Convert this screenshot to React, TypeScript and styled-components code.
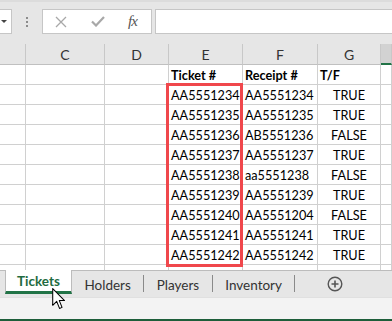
import React from "react";
import styled, { createGlobalStyle } from "styled-components";

const GlobalStyle = createGlobalStyle`
  html, body {
    margin: 0;
    padding: 0;
    background: #ffffff;
  }
  * {
    box-sizing: border-box;
  }
`;

const COLS = "26px 79px 64px 74px 75px 63px 1fr";
const GRID_LINE = "#d0d0d0";
const EXCEL_GREEN = "#217346";

const Sheet = styled.div`
  position: relative;
  width: 392px;
  height: 321px;
  overflow: hidden;
  display: flex;
  flex-direction: column;
  font-family: Lato, "Noto Sans", sans-serif;
  background: #ffffff;
`;

const FormulaBar = styled.div`
  height: 44px;
  flex: none;
  display: flex;
  align-items: flex-start;
  padding-top: 9px;
  background: #e6e6e6;
  border-top: 2px solid #dcdcdc;
`;

const NameBox = styled.div`
  width: 12px;
  height: 25px;
  margin-top: -2px;
  background: #ffffff;
  border: 1px solid #c6c6c6;
  border-left: none;
  display: flex;
  align-items: center;
`;

const DropArrow = styled.div`
  width: 0;
  height: 0;
  margin-left: 1px;
  border-left: 3px solid transparent;
  border-right: 3px solid transparent;
  border-top: 3px solid #444;
`;

const Grip = styled.div`
  width: 30px;
  height: 25px;
  margin-top: -2px;
  display: flex;
  flex-direction: column;
  align-items: center;
  justify-content: center;
  gap: 2px;
`;

const GripDot = styled.span`
  width: 2px;
  height: 2px;
  background: #8c8c8c;
`;

const FxBox = styled.div`
  width: 110px;
  height: 25px;
  margin-top: -2px;
  background: #ffffff;
  border: 1px solid #c6c6c6;
  display: flex;
  align-items: center;
  gap: 24px;
  padding-left: 12px;
`;

const FxLabel = styled.span`
  font-family: "Liberation Serif", serif;
  font-style: italic;
  font-size: 15px;
  color: #555;
  letter-spacing: -1px;
  margin-left: -1px;
`;

const FormulaInput = styled.div`
  flex: 1;
  height: 25px;
  margin-top: -2px;
  margin-left: 3px;
  background: #ffffff;
  border: 1px solid #c6c6c6;
  border-right: none;
`;

const Row = styled.div<{ $header?: boolean }>`
  display: grid;
  grid-template-columns: ${COLS};
  height: ${(p) => (p.$header ? "21px" : "20px")};
  flex: none;
  background: ${(p) => (p.$header ? "#e6e6e6" : "#ffffff")};
`;

const HeadCell = styled.div<{ $active?: boolean }>`
  display: flex;
  align-items: center;
  justify-content: center;
  font-size: 14px;
  color: #333;
  border-right: 1px solid #c8c8c8;
  border-bottom: ${(p) => (p.$active ? `2px solid ${EXCEL_GREEN}` : "1px solid #c0c0c0")};
  background: ${(p) => (p.$active ? "#d2d2d2" : "transparent")};
`;

const Cell = styled.div<{ $align?: "left" | "center"; $bold?: boolean }>`
  border-right: 1px solid ${GRID_LINE};
  border-bottom: 1px solid ${GRID_LINE};
  padding: 2px 0 0 ${(p) => (p.$align === "center" ? "0" : "2px")};
  text-align: ${(p) => p.$align ?? "left"};
  font-size: 12.7px;
  line-height: 17px;
  font-weight: ${(p) => (p.$bold ? 700 : 400)};
  color: #000;
  white-space: nowrap;
`;

const GridArea = styled.div`
  position: relative;
  flex: 1;
  overflow: hidden;
  display: flex;
  flex-direction: column;
`;

const Highlight = styled.div`
  position: absolute;
  left: 166px;
  top: 18px;
  width: 77px;
  height: 184px;
  border: 3px solid #f0474c;
  pointer-events: none;
`;

const TabBar = styled.div`
  height: 27px;
  flex: none;
  display: flex;
  align-items: stretch;
  padding-left: 5px;
  background: #e6e6e6;
  border-top: 1px solid #bcbcbc;
`;

const Tab = styled.div<{ $active?: boolean }>`
  display: flex;
  align-items: center;
  font-size: 13.5px;
  height: ${(p) => (p.$active ? "24px" : "27px")};
  margin-top: ${(p) => (p.$active ? "-1px" : "0")};
  font-weight: ${(p) => (p.$active ? 700 : 400)};
  color: ${(p) => (p.$active ? "#1e6b41" : "#333")};
  background: ${(p) => (p.$active ? "#ffffff" : "transparent")};
  border-bottom: ${(p) => (p.$active ? `3px solid ${EXCEL_GREEN}` : "none")};
  border-left: ${(p) => (p.$active ? "1px solid #bcbcbc" : "none")};
  border-right: ${(p) => (p.$active ? "1px solid #bcbcbc" : "none")};
  padding: 0 ${(p) => (p.$active ? "11px" : "12.5px")};
`;

const TabSep = styled.span`
  width: 1px;
  margin: 4px 0 5px;
  background: #8a8a8a;
`;

const AddSheet = styled.div`
  width: 80px;
  display: flex;
  align-items: center;
  justify-content: center;
`;

const StatusStrip = styled.div`
  height: 24px;
  flex: none;
  background: #f3f3f3;
  border-top: 1px solid #e0e0e0;
  border-bottom: 2px solid #1e5e3a;
`;

const Cursor = styled.svg`
  position: absolute;
  left: 52px;
  top: 288px;
  pointer-events: none;
`;

const rows: string[][] = [
  ["AA5551234", "AA5551234", "TRUE"],
  ["AA5551235", "AA5551235", "TRUE"],
  ["AA5551236", "AB5551236", "FALSE"],
  ["AA5551237", "AA5551237", "TRUE"],
  ["AA5551238", "aa5551238", "FALSE"],
  ["AA5551239", "AA5551239", "TRUE"],
  ["AA5551240", "AA5551204", "FALSE"],
  ["AA5551241", "AA5551241", "TRUE"],
  ["AA5551242", "AA5551242", "TRUE"],
];

const letters = ["", "C", "D", "E", "F", "G", ""];
const tabs = ["Tickets", "Holders", "Players", "Inventory"];

const App: React.FC = () => {
  return (
    <Sheet>
      <GlobalStyle />
      <FormulaBar>
        <NameBox>
          <DropArrow />
        </NameBox>
        <Grip>
          <GripDot />
          <GripDot />
          <GripDot />
        </Grip>
        <FxBox>
          <svg width="12" height="12" viewBox="0 0 12 12">
            <path d="M1 1 L11 11 M11 1 L1 11" stroke="#a8a8a8" strokeWidth="1.3" fill="none" />
          </svg>
          <svg width="14" height="11" viewBox="0 0 14 11">
            <path d="M1 5.5 L5 9.5 L13 1" stroke="#a8a8a8" strokeWidth="2.2" fill="none" />
          </svg>
          <FxLabel>fx</FxLabel>
        </FxBox>
        <FormulaInput />
      </FormulaBar>

      <Row $header>
        {letters.map((l, i) => (
          <HeadCell key={i} $active={i === 6}>
            {l}
          </HeadCell>
        ))}
      </Row>

      <GridArea>
        <Row>
          <Cell />
          <Cell />
          <Cell />
          <Cell $bold>Ticket #</Cell>
          <Cell $bold>Receipt #</Cell>
          <Cell $bold>T/F</Cell>
          <Cell />
        </Row>
        {rows.map((r, i) => (
          <Row key={i}>
            <Cell />
            <Cell />
            <Cell />
            <Cell>{r[0]}</Cell>
            <Cell>{r[1]}</Cell>
            <Cell $align="center">{r[2]}</Cell>
            <Cell />
          </Row>
        ))}
        <Row>
          <Cell />
          <Cell />
          <Cell />
          <Cell />
          <Cell />
          <Cell />
          <Cell />
        </Row>
        <Highlight />
      </GridArea>

      <TabBar>
        {tabs.map((t, i) => (
          <React.Fragment key={t}>
            <Tab $active={i === 0}>{t}</Tab>
            {i > 0 && <TabSep />}
          </React.Fragment>
        ))}
        <AddSheet>
          <svg width="16" height="16" viewBox="0 0 16 16">
            <circle cx="8" cy="8" r="6.8" stroke="#555" strokeWidth="1.4" fill="none" />
            <path d="M8 4.5 V11.5 M4.5 8 H11.5" stroke="#555" strokeWidth="1.6" />
          </svg>
        </AddSheet>
      </TabBar>
      <StatusStrip />

      <Cursor width="14" height="22" viewBox="0 0 13 21">
        <path
          d="M0.5 0.5 L0.5 16.5 L4.3 12.8 L7 19.5 L9.4 18.5 L6.8 12 L11.8 12 Z"
          fill="#ffffff"
          stroke="#000000"
          strokeWidth="1"
          strokeLinejoin="round"
        />
      </Cursor>
    </Sheet>
  );
};

export default App;
